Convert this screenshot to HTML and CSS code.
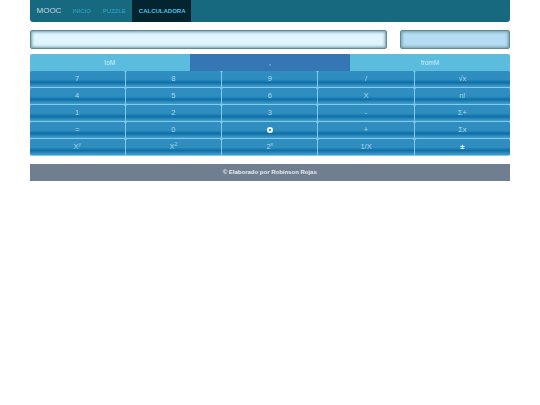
FILE: index.html
```html
<!DOCTYPE html>
<html>
<head lang="es">
    <meta charset="UTF-8">
    <title>Calculadora</title>
    <link rel="stylesheet" href="styles.css">
</head>
<body>

<div class="page">
    <nav class="navbar">
        <span class="brand">MOOC</span>
        <a class="link">INICIO</a>
        <a class="link">PUZZLE</a>
        <a class="link active">CALCULADORA</a>
    </nav>

    <div class="screens">
        <input class="screen main" type="text">
        <input class="screen memory" type="text">
    </div>

    <div class="calc">
        <div class="top">
            <button class="top-btn">toM</button>
            <button class="top-btn dark">,</button>
            <button class="top-btn">fromM</button>
        </div>
        <div class="keys">
            <button class="key">7</button>
            <button class="key">8</button>
            <button class="key">9</button>
            <button class="key">/</button>
            <button class="key">√x</button>

            <button class="key">4</button>
            <button class="key">5</button>
            <button class="key">6</button>
            <button class="key">X</button>
            <button class="key">n!</button>

            <button class="key">1</button>
            <button class="key">2</button>
            <button class="key">3</button>
            <button class="key">-</button>
            <button class="key">Σ+</button>

            <button class="key">=</button>
            <button class="key">0</button>
            <button class="key"><span class="ring"></span></button>
            <button class="key">+</button>
            <button class="key">Σx</button>

            <button class="key">X<sup>y</sup></button>
            <button class="key">X<sup>2</sup></button>
            <button class="key">2<sup>x</sup></button>
            <button class="key">1/X</button>
            <button class="key strong">±</button>
        </div>
    </div>

    <footer class="footer">© Elaborado por Robinson Rojas</footer>
</div>

</body>
</html>
```

FILE: styles.css
```css
* {
    box-sizing: border-box;
    padding: 0;
    margin: 0;
    font-family: "Liberation Sans", Arial, sans-serif;
}
body {
    background: #fff;
}
.page {
    width: 480.5px;
    margin-left: 29.5px;
}
.navbar {
    display: flex;
    align-items: stretch;
    height: 22px;
    padding-left: 7px;
    background: #17697f;
    border-radius: 0 0 3px 3px;
}
.brand {
    width: 29px;
    margin-right: 7px;
    line-height: 22px;
    font-size: 8px;
    color: #c5d8de;
}
.link {
    margin-right: 12px;
    line-height: 22px;
    font-size: 6px;
    color: #2fa6cf;
}
.link.active {
    width: 59px;
    padding-left: 7px;
    margin: 0 0 0 -6px;
    background: #04242f;
    color: #4fc1e2;
    font-weight: bold;
}
.screens {
    display: flex;
    justify-content: space-between;
    margin-top: 8px;
}
.screen {
    height: 19px;
    border: 1px solid #5d8b98;
    border-radius: 2px;
    box-shadow: inset 0 0 3px 1px #6d99a5;
    outline: none;
}
.main {
    width: 357.5px;
    background: #def5fd;
}
.memory {
    width: 110px;
    background: #b4dcf2;
}
.calc {
    margin-top: 4.5px;
    overflow: hidden;
    border-radius: 2px;
}
.top {
    display: grid;
    grid-template-columns: 160.5px 160px 160px;
    height: 17.5px;
}
.top-btn {
    border: 0;
    background: #5bbcde;
    color: #d5edf6;
    font-size: 6.5px;
}
.top-btn.dark {
    background: #3577b5;
}
.keys {
    display: grid;
    grid-template-columns: repeat(5, 1fr);
    grid-auto-rows: 17px;
    column-gap: 1px;
    background: #7ccdec;
}
.key {
    border: 0;
    border-bottom: 1px solid #7ccdec;
    border-radius: 1.5px;
    background: linear-gradient(#2f8dbf 0, #2f8dbf 52%, #1c7eb4 62%, #0f70a8 72%, #2684b8 84%, #4a9fca 100%);
    color: #a9d8ec;
    font-size: 7.5px;
    line-height: 16px;
}
.key sup {
    font-size: 5px;
    line-height: 0;
}
.key.strong {
    color: #f2fbff;
    font-weight: bold;
}
.ring {
    display: inline-block;
    width: 6px;
    height: 6px;
    border: 2px solid #f2fbff;
    border-radius: 50%;
    background: #1a6f9f;
    vertical-align: -1px;
}
.footer {
    height: 17px;
    margin-top: 8px;
    background: #6f7f91;
    color: #e6e9ed;
    font-size: 6px;
    font-weight: bold;
    line-height: 17.5px;
    text-align: center;
}
```
